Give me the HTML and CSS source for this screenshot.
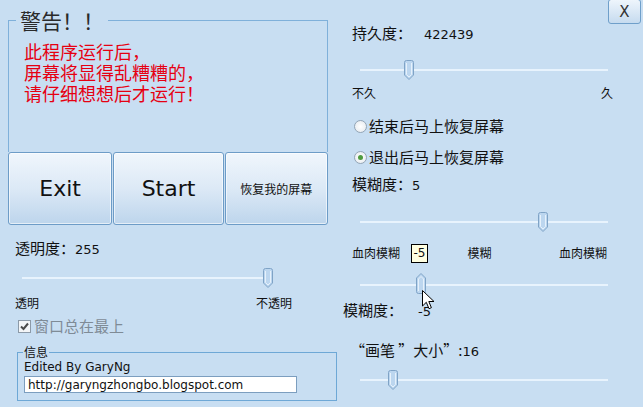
FILE: index.html
```html
<!DOCTYPE html>
<html lang="zh-CN">
<head>
    <meta charset="UTF-8">
    <title>屏幕</title>
    <link rel="stylesheet" href="styles.css">
</head>
<body>
    <div class="form">
        <div class="col-left">
            <fieldset class="warn">
                <legend>警告！！</legend>
                <p class="warn-text">此程序运行后，<br>屏幕将显得乱糟糟的，<br>请仔细想想后才运行！</p>
            </fieldset>
            <div class="actions">
                <button class="big btn-exit">Exit</button>
                <button class="big btn-start">Start</button>
                <button class="big btn-restore">恢复我的屏幕</button>
            </div>

            <div class="value-line opacity-line">透明度：<span class="num">255</span></div>
            <div class="slider opacity-slider">
                <div class="track"></div>
                <svg class="thumb" style="left:241px" width="10" height="20" viewBox="0 0 10 20"><path d="M0.5 2.5 Q0.5 0.5 2.5 0.5 H7.5 Q9.5 0.5 9.5 2.5 V15 L5 19.5 L0.5 15 Z" fill="#bcd6ef" stroke="#7fa3c6"/><path d="M2.5 3 V14.5 L5 17 L7.5 14.5 V3" fill="none" stroke="#e6f1fb"/></svg>
            </div>
            <div class="range-labels opacity-labels"><span>透明</span><span>不透明</span></div>
            <label class="check">
                <span class="box"><svg width="11" height="11" viewBox="0 0 11 11"><path d="M2 5.5 L4.5 8 L9 2.5" fill="none" stroke="#4b4b4b" stroke-width="2"/></svg></span>窗口总在最上
            </label>

            <fieldset class="info">
                <legend>信息</legend>
                <div class="author">Edited By GaryNg</div>
                <input type="text" class="url" value="http://garyngzhongbo.blogspot.com">
            </fieldset>
        </div>

        <div class="col-right">
            <div class="title-row"><button class="close">X</button></div>

            <div class="value-line keep-line">持久度：<span class="num gap">422439</span></div>
            <div class="slider keep-slider">
                <div class="track"></div>
                <svg class="thumb" style="left:44px" width="10" height="20" viewBox="0 0 10 20"><path d="M0.5 2.5 Q0.5 0.5 2.5 0.5 H7.5 Q9.5 0.5 9.5 2.5 V15 L5 19.5 L0.5 15 Z" fill="#bcd6ef" stroke="#7fa3c6"/><path d="M2.5 3 V14.5 L5 17 L7.5 14.5 V3" fill="none" stroke="#e6f1fb"/></svg>
            </div>
            <div class="range-labels keep-labels"><span>不久</span><span>久</span></div>

            <label class="radio radio-first"><span class="dot"></span>结束后马上恢复屏幕</label>
            <label class="radio radio-second checked"><span class="dot"></span>退出后马上恢复屏幕</label>

            <div class="value-line blur-line">模糊度：<span class="num">5</span></div>
            <div class="slider blur-slider">
                <div class="track"></div>
                <svg class="thumb" style="left:178px" width="10" height="20" viewBox="0 0 10 20"><path d="M0.5 2.5 Q0.5 0.5 2.5 0.5 H7.5 Q9.5 0.5 9.5 2.5 V15 L5 19.5 L0.5 15 Z" fill="#bcd6ef" stroke="#7fa3c6"/><path d="M2.5 3 V14.5 L5 17 L7.5 14.5 V3" fill="none" stroke="#e6f1fb"/></svg>
            </div>
            <div class="range-labels blur-labels"><span>血肉模糊</span><span>模糊</span><span>血肉模糊</span></div>
            <div class="slider level-slider">
                <div class="track"></div>
                <svg class="thumb" style="left:56px" width="10" height="21" viewBox="0 0 10 21"><path d="M0.5 5 L5 0.5 L9.5 5 V18.5 Q9.5 20.5 7.5 20.5 H2.5 Q0.5 20.5 0.5 18.5 Z" fill="#bcd6ef" stroke="#7fa3c6"/><path d="M2.5 18 V6 L5 3.5 L7.5 6 V18" fill="none" stroke="#e6f1fb"/></svg>
                <span class="tip" style="left:51px">-5</span>
                <svg class="cursor" width="13" height="20" viewBox="0 0 13 20"><path d="M0.5 0.5 V16 L4.3 12.3 L7 18.7 L9.4 17.7 L6.8 11.5 H12 Z" fill="#fff" stroke="#000"/></svg>
            </div>
            <div class="value-line level-line">模糊度：<span class="num gap-wide">-5</span></div>

            <div class="value-line pen-line">“画笔 ”大小”:<span class="num">16</span></div>
            <div class="slider pen-slider">
                <div class="track"></div>
                <svg class="thumb" style="left:28px" width="10" height="20" viewBox="0 0 10 20"><path d="M0.5 2.5 Q0.5 0.5 2.5 0.5 H7.5 Q9.5 0.5 9.5 2.5 V15 L5 19.5 L0.5 15 Z" fill="#bcd6ef" stroke="#7fa3c6"/><path d="M2.5 3 V14.5 L5 17 L7.5 14.5 V3" fill="none" stroke="#e6f1fb"/></svg>
            </div>
        </div>
    </div>
</body>
</html>
```

FILE: styles.css
```css
body {
    margin: 0;
    background-color: #c8def2;
    font-family: "Noto Sans CJK SC", "DejaVu Sans", sans-serif;
    color: #111;
    overflow: hidden;
}

.form {
    display: flex;
    width: 643px;
    height: 407px;
}

.col-left {
    width: 337px;
    display: flex;
    flex-direction: column;
}

.col-right {
    flex: 1;
    display: flex;
    flex-direction: column;
}

/* warning box */
.warn {
    box-sizing: border-box;
    width: 320px;
    height: 144px;
    margin: 8px 0 0 8px;
    padding: 0;
    border: 1px solid #7fb0da;
    border-bottom: none;
}

.warn legend {
    margin-left: 7px;
    padding: 0 4px;
    font-size: 21px;
    line-height: 24px;
    color: #2a2a2a;
}

.warn-text {
    margin: 0;
    padding: 9px 0 0 15px;
    font-size: 18px;
    line-height: 21px;
    color: #e60012;
}

.actions {
    display: flex;
    margin-left: 8px;
    width: 320px;
    height: 73px;
}

.big {
    height: 73px;
    margin: 0;
    padding: 0;
    border: 1px solid #6d9cc7;
    border-radius: 3px;
    background: linear-gradient(#f0f6fc, #dce9f6 50%, #bdd5ec);
    box-shadow: inset 0 0 0 1px rgba(255, 255, 255, 0.6);
    color: #111;
    font-family: "DejaVu Sans", sans-serif;
    font-size: 22px;
}

.btn-exit { width: 105px; }
.btn-start { width: 111px; margin-left: 1px; }
.btn-restore {
    width: 104px;
    margin-left: 1px;
    font-family: "Noto Sans CJK SC", sans-serif;
    font-size: 12px;
}

.value-line {
    font-size: 15px;
    line-height: 18px;
    white-space: pre;
}

.num {
    font-family: "DejaVu Sans", sans-serif;
    font-size: 13px;
}

.gap { margin-left: 12px; }
.gap-wide { margin-left: 15px; }

.opacity-line {
    margin: 14px 0 0 15px;
}

/* sliders */
.slider {
    position: relative;
    height: 20px;
}

.track {
    position: absolute;
    left: 0;
    right: 0;
    top: 9px;
    height: 2px;
    background-color: #e8f3fd;
}

.thumb {
    position: absolute;
    top: 0;
}

.opacity-slider {
    margin: 9px 0 0 22px;
    width: 243px;
}

.range-labels {
    display: flex;
    justify-content: space-between;
    font-size: 12px;
    line-height: 14px;
}

.opacity-labels {
    margin: 8px 0 0 15px;
    width: 277px;
}

.check {
    display: flex;
    align-items: center;
    margin: 7px 0 0 18px;
    font-size: 15px;
    line-height: 18px;
    color: #7f8b96;
}

.check .box {
    display: flex;
    align-items: center;
    justify-content: center;
    box-sizing: border-box;
    width: 13px;
    height: 13px;
    margin-right: 3px;
    border: 1px solid #8c9aa8;
    background-color: #f3f5f7;
}

/* info box */
.info {
    box-sizing: border-box;
    width: 320px;
    height: 56px;
    margin: 10px 0 0 17px;
    padding: 0 0 6px 6px;
    border: 1px solid #6ea8d6;
}

.info legend {
    margin-left: -1px;
    padding: 0 1px;
    font-size: 12px;
    line-height: 14px;
}

.author {
    font-family: "DejaVu Sans", sans-serif;
    font-size: 12px;
    line-height: 17px;
}

.url {
    display: block;
    box-sizing: border-box;
    width: 273px;
    height: 17px;
    margin: 0;
    padding: 0 3px;
    border: 1px solid #7c9ebf;
    background-color: #fff;
    font-family: "DejaVu Sans", sans-serif;
    font-size: 12px;
    color: #111;
}

/* right column */
.title-row {
    display: flex;
    justify-content: flex-end;
    height: 24px;
    padding-right: 2px;
}

.close {
    width: 33px;
    height: 25px;
    margin-top: -1px;
    padding: 0;
    border: 1px solid #6f9fca;
    border-radius: 3px;
    background: linear-gradient(#eef5fc, #c6dbef);
    font-family: "DejaVu Sans", sans-serif;
    font-size: 15px;
    color: #333;
}

.keep-line {
    margin: 0 0 0 15px;
}

.keep-slider {
    margin: 16px 0 0 23px;
    width: 248px;
}

.keep-labels {
    margin: 6px 0 0 15px;
    width: 261px;
}

.radio {
    display: flex;
    align-items: center;
    margin-left: 17px;
    font-size: 15px;
    line-height: 18px;
}

.radio-first { margin-top: 17px; }
.radio-second { margin-top: 13px; }

.radio .dot {
    display: flex;
    align-items: center;
    justify-content: center;
    box-sizing: border-box;
    width: 13px;
    height: 13px;
    margin-right: 2px;
    border: 1px solid #93a5b6;
    border-radius: 50%;
    background: radial-gradient(#ffffff, #e3e8ed);
}

.radio.checked .dot::after {
    content: "";
    width: 5px;
    height: 5px;
    border-radius: 50%;
    background-color: #4f9b3f;
}

.blur-line {
    margin: 9px 0 0 15px;
}

.blur-slider {
    margin: 17px 0 0 23px;
    width: 248px;
}

.blur-labels {
    margin: 14px 0 0 15px;
    width: 255px;
}

.level-slider {
    margin: 13px 0 0 23px;
    width: 248px;
    height: 21px;
}

.level-slider .track {
    top: 11px;
}

.tip {
    position: absolute;
    top: -29px;
    box-sizing: border-box;
    width: 17px;
    height: 19px;
    border: 1px solid #000;
    background-color: #ffffe1;
    font-family: "DejaVu Sans", sans-serif;
    font-size: 12px;
    line-height: 17px;
    text-align: center;
}

.cursor {
    position: absolute;
    left: 62px;
    top: 17px;
}

.level-line {
    margin: 7px 0 0 6px;
}

.pen-line {
    margin: 20px 0 0 13px;
}

.pen-slider {
    margin: 9px 0 0 23px;
    width: 248px;
}
```
